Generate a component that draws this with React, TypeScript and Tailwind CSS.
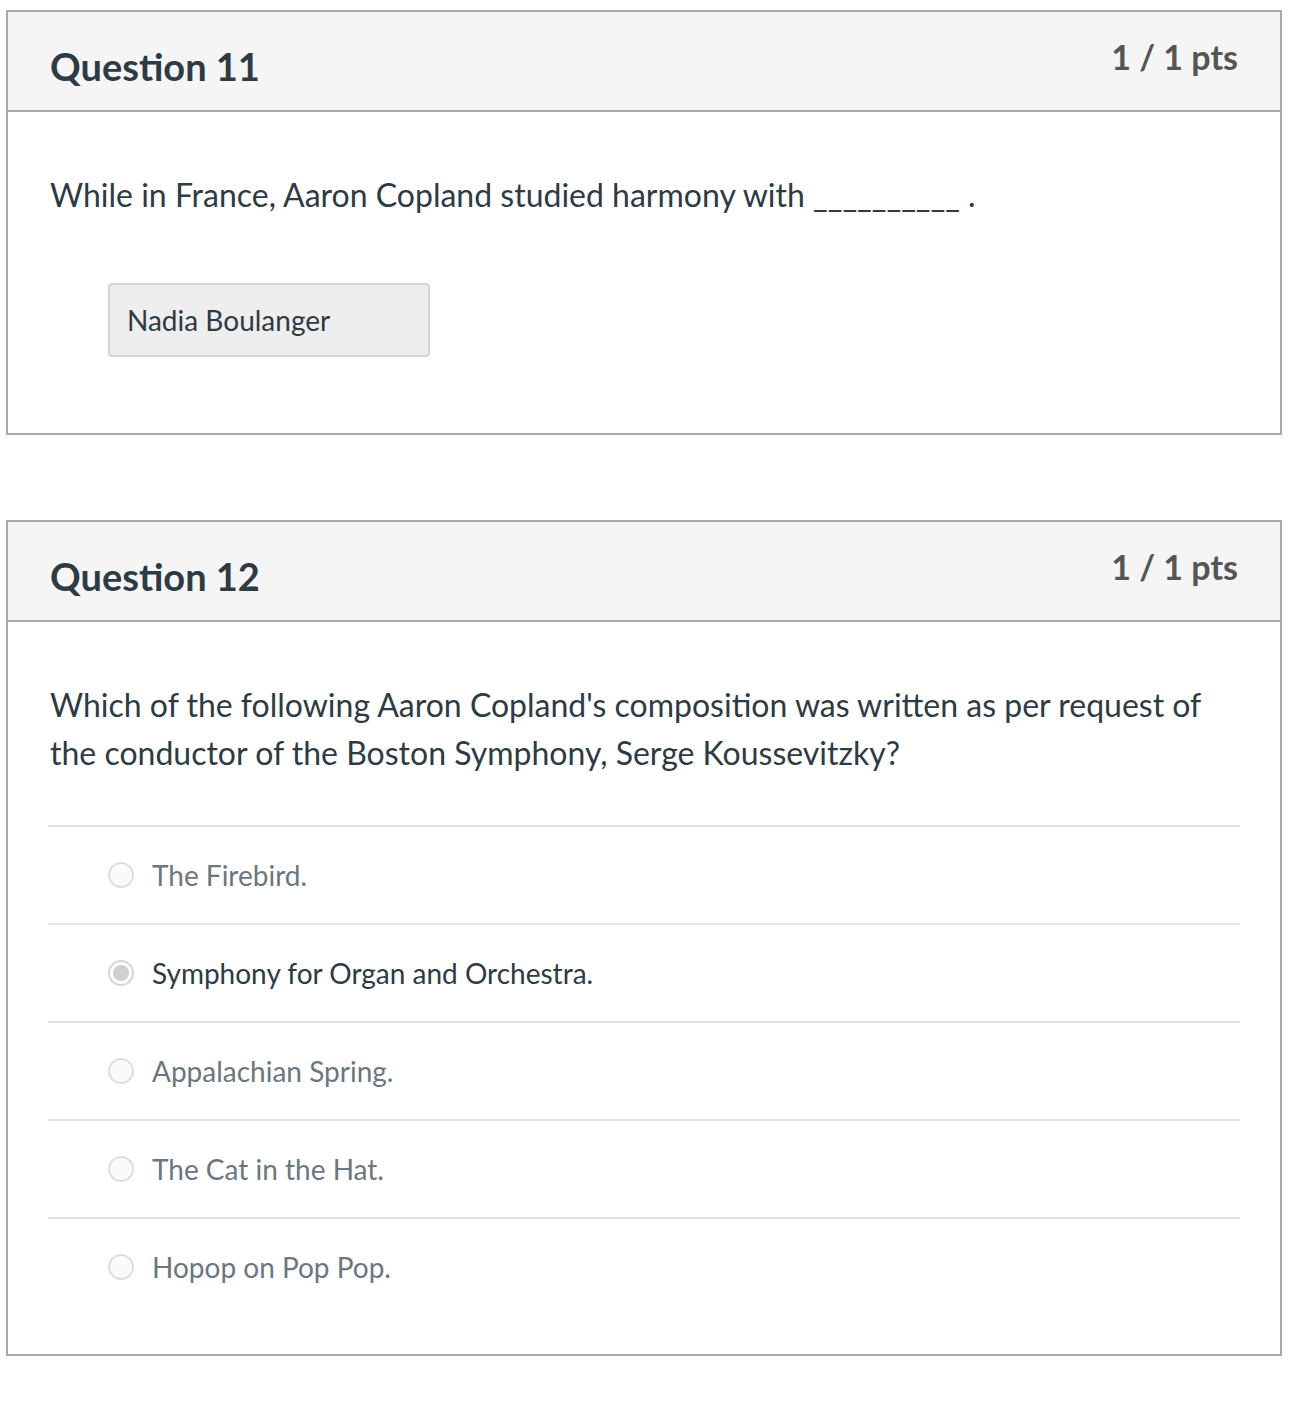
import React from "react";

const answers = [
  { text: "The Firebird.", selected: false },
  { text: "Symphony for Organ and Orchestra.", selected: true },
  { text: "Appalachian Spring.", selected: false },
  { text: "The Cat in the Hat.", selected: false },
  { text: "Hopop on Pop Pop.", selected: false },
];

const Header = ({ title }: { title: string }) => (
  <div className="flex h-[100px] items-start justify-between border-b-2 border-[#a9a9a9] bg-[#f5f5f5] pl-[42px] pr-[42px]">
    <h2 className="mt-[30px] text-[38px] leading-[48px] font-bold text-[#2d3b45]">{title}</h2>
    <span className="mt-[25px] text-[34px] leading-[40px] font-bold text-[#555555]">1 / 1 pts</span>
  </div>
);

const Radio = ({ selected }: { selected: boolean }) =>
  selected ? (
    <span className="flex h-[26px] w-[26px] items-center justify-center rounded-full border-2 border-[#d6d6d6] bg-white">
      <span className="h-[16px] w-[16px] rounded-full bg-[#cfcfcf]" />
    </span>
  ) : (
    <span className="h-[26px] w-[26px] rounded-full border-2 border-[#dedede] bg-[#fafafa]" />
  );

export default function App() {
  return (
    <div
      className="min-h-screen bg-white px-[6px] pt-[10px]"
      style={{ fontFamily: "Lato, 'Open Sans', sans-serif" }}
    >
      <div className="w-[1276px] border-2 border-[#a9a9a9]">
        <Header title="Question 11" />
        <div className="px-[42px] pt-[59px] pb-[76px]">
          <p className="text-[32px] leading-[48px] text-[#2d3b45]">
            While in France, Aaron Copland studied harmony with __________ .
          </p>
          <div className="mt-[64px] ml-[58px] flex h-[74px] w-[322px] items-center rounded border-2 border-[#d4d4d4] bg-[#eeeeee] px-[17px] text-[28px] text-[#2d3b45]">
            Nadia Boulanger
          </div>
        </div>
      </div>

      <div className="mt-[85px] w-[1276px] border-2 border-[#a9a9a9]">
        <Header title="Question 12" />
        <div className="px-[40px] pt-[59px] pb-[39px]">
          <p className="px-[2px] text-[32px] leading-[48px] text-[#2d3b45]">
            Which of the following Aaron Copland's composition was written as per request of the conductor of the Boston Symphony, Serge Koussevitzky?
          </p>
          <div className="mt-[48px]">
            {answers.map(({ text, selected }, i) => (
              <div
                key={i}
                className="flex h-[98px] items-center gap-[18px] border-t-2 border-[#e3e3e3] pl-[60px]"
              >
                <Radio selected={selected} />
                <span className={`text-[28px] ${selected ? "text-[#2d3b45]" : "text-[#6b7780]"}`}>{text}</span>
              </div>
            ))}
          </div>
        </div>
      </div>
    </div>
  );
}
